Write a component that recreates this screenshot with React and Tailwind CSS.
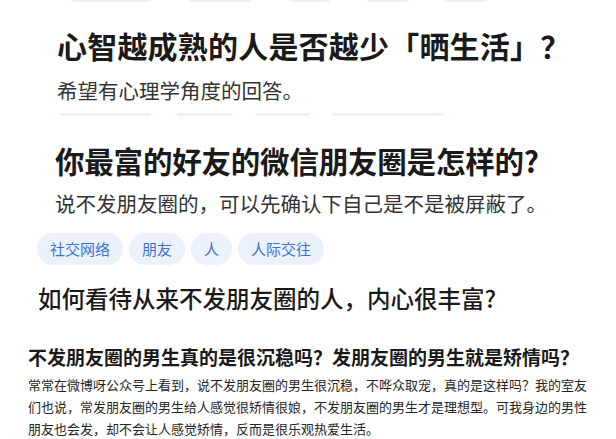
import React from "react";

const topSlivers = [
  { ml: 71, w: 80 },
  { ml: 38, w: 62 },
  { ml: 38, w: 41 },
  { ml: 37, w: 42 },
  { ml: 35, w: 43 },
];

const midSlivers = [
  { ml: 59, w: 92 },
  { ml: 26, w: 55 },
  { ml: 23, w: 55 },
  { ml: 22, w: 112 },
];

const tags = ["社交网络", "朋友", "人", "人际交往"];

function Slivers({ items, h }) {
  return (
    <div className={`flex ${h}`}>
      {items.map((s, i) => (
        <div
          key={i}
          className="h-full rounded-b-full bg-[#edf0fb]"
          style={{ marginLeft: s.ml, width: s.w }}
        />
      ))}
    </div>
  );
}

export default function App() {
  return (
    <div
      className="w-[616px] h-[439px] overflow-hidden bg-white text-[#1a1a1a]"
      style={{ fontFamily: '"Noto Sans CJK SC", "Noto Sans", sans-serif' }}
    >
      <Slivers items={topSlivers} h="h-[2px]" />

      <h2 className="mt-[25px] pl-[57px] text-[30px] leading-[36px] font-bold whitespace-nowrap tracking-[0.2px]">
        心智越成熟的人是否越少「晒生活」？
      </h2>
      <p className="mt-[13px] pl-[57px] text-[20.5px] leading-[28px] text-[#333]">
        希望有心理学角度的回答。
      </p>

      <div className="mt-[9px]">
        <Slivers items={midSlivers} h="h-[3px]" />
      </div>

      <h2 className="mt-[26px] pl-[55px] text-[29.5px] leading-[36px] font-bold whitespace-nowrap tracking-[-0.2px]">
        你最富的好友的微信朋友圈是怎样的?
      </h2>
      <p className="mt-[11px] pl-[55px] text-[20.5px] leading-[28px] text-[#333] whitespace-nowrap">
        说不发朋友圈的，可以先确认下自己是不是被屏蔽了。
      </p>

      <div className="mt-[16px] pl-[37px] flex gap-[6px]">
        {tags.map((t) => (
          <span
            key={t}
            className="h-[32px] px-[13px] flex items-center rounded-full bg-[#ebf2fd] text-[#3f72d0] text-[15px]"
          >
            {t}
          </span>
        ))}
      </div>

      <h3 className="mt-[18px] pl-[38px] text-[23.5px] leading-[30px] font-medium whitespace-nowrap">
        如何看待从来不发朋友圈的人，内心很丰富?
      </h3>

      <h4 className="mt-[31px] pl-[28px] text-[19px] leading-[26px] font-semibold whitespace-nowrap">
        不发朋友圈的男生真的是很沉稳吗？发朋友圈的男生就是矫情吗？
      </h4>
      <div className="mt-[4px] pl-[28px] text-[13px] leading-[22px] text-[#262626] whitespace-nowrap">
        <div>常常在微博呀公众号上看到，说不发朋友圈的男生很沉稳，不哗众取宠，真的是这样吗？我的室友</div>
        <div>们也说，常发朋友圈的男生给人感觉很矫情很娘，不发朋友圈的男生才是理想型。可我身边的男性</div>
        <div>朋友也会发，却不会让人感觉矫情，反而是很乐观热爱生活。</div>
      </div>
    </div>
  );
}
